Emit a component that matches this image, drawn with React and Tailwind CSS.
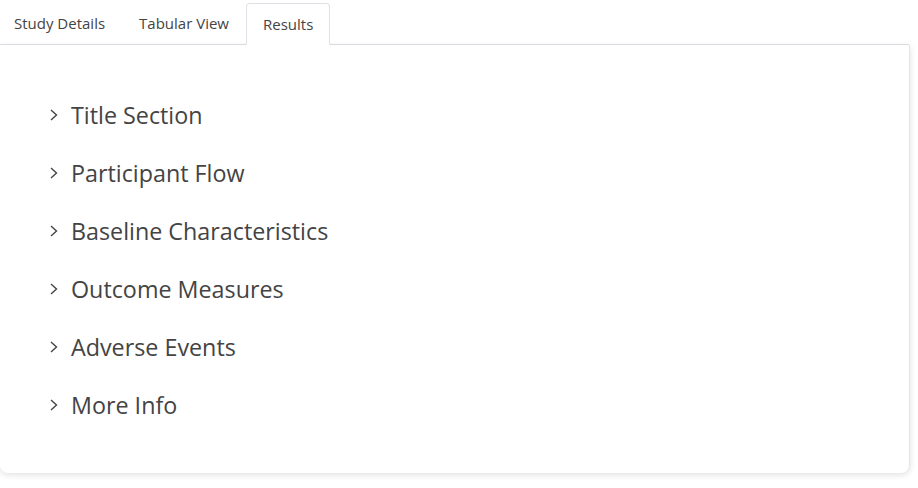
import React from 'react';

const sections = [
    'Title Section',
    'Participant Flow',
    'Baseline Characteristics',
    'Outcome Measures',
    'Adverse Events',
    'More Info',
];

const tabs = ['Study Details', 'Tabular View', 'Results'];

const Chevron = () => (
    <svg width="12" height="16" viewBox="0 0 12 16" fill="none" stroke="#444" strokeWidth="1.4">
        <path d="M3 3l5.5 5-5.5 5" />
    </svg>
);

export default function App() {
    return (
        <div className="w-[918px] h-[488px] bg-white overflow-hidden" style={{ fontFamily: '"Open Sans", "Noto Sans", sans-serif' }}>
            {/* Tabs */}
            <div className="flex items-end h-[45px] border-b border-[#dee2e6] w-[909px]">
                {tabs.map((t, i) => {
                    const active = t === 'Results';
                    return (
                        <div
                            key={t}
                            className={
                                active
                                    ? 'h-[42px] px-[16px] flex items-center text-[15px] text-[#444] bg-white border border-[#dee2e6] border-b-white rounded-t-[4px] -mb-px'
                                    : i === 0
                                    ? 'h-[42px] pl-[14px] pr-[17px] flex items-center text-[15px] text-[#444]'
                                    : 'h-[42px] px-[17px] flex items-center text-[15px] text-[#444]'
                            }
                        >
                            {t}
                        </div>
                    );
                })}
            </div>

            {/* Card */}
            <div className="w-[910px] h-[428px] bg-white rounded-b-[8px] border-r border-[#e4e4e4] shadow-[0_2px_6px_rgba(0,0,0,0.12)] pt-[41px] pl-[48px]">
                <div className="flex flex-col">
                    {sections.map((s) => (
                        <div key={s} className="h-[58px] flex items-center gap-[11px] text-[23.3px] text-[#444]">
                            <Chevron />
                            <span>{s}</span>
                        </div>
                    ))}
                </div>
            </div>
        </div>
    );
}
